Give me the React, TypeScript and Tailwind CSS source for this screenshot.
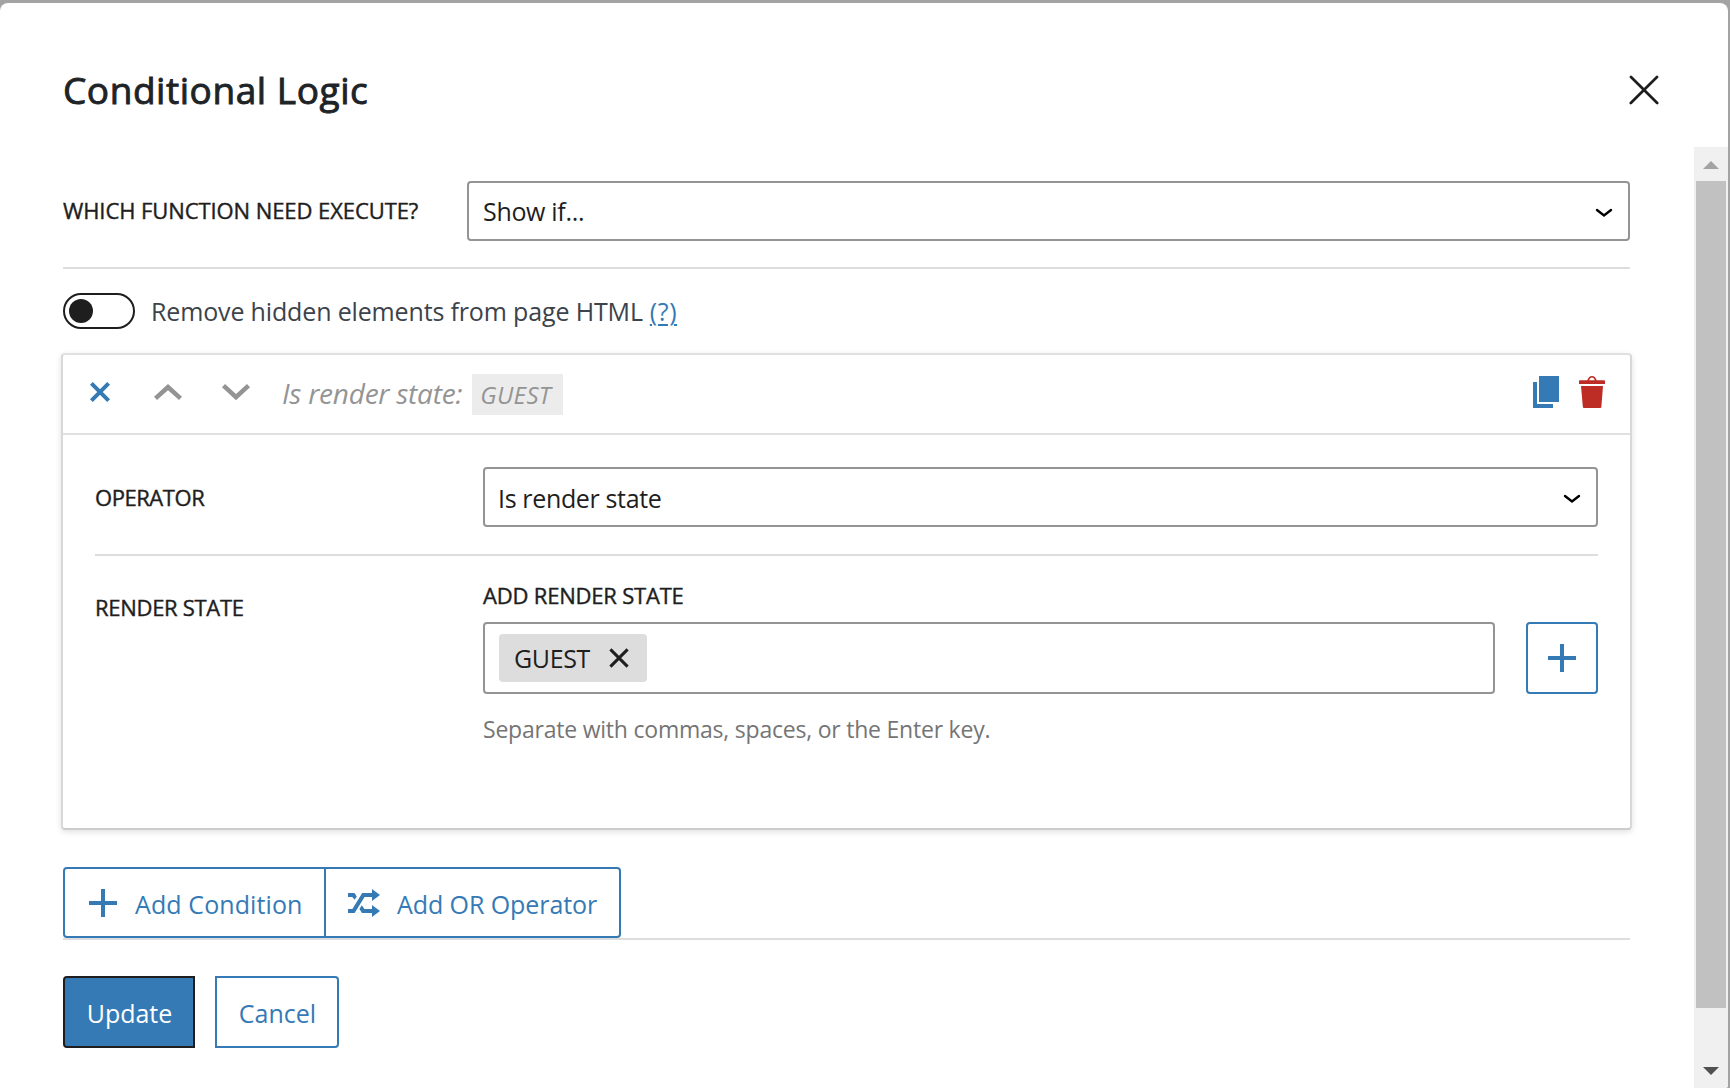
import type { ReactNode } from "react";

function CaretDown() {
  return (
    <svg className="mt-[3px]" width="18" height="10" viewBox="0 0 18 10" fill="none" stroke="#000" strokeWidth="2.4">
      <path d="M2 2l7 5.4L16 2" strokeLinecap="round" strokeLinejoin="miter" />
    </svg>
  );
}

function Plus() {
  return (
    <svg width="28" height="28" viewBox="0 0 28 28" fill="#357ab5">
      <path d="M12 0h4v12h12v4H16v12h-4V16H0v-4h12z" />
    </svg>
  );
}

function Shuffle() {
  return (
    <svg width="32" height="28" viewBox="0 0 32 28" fill="#357ab5">
      <path d="M0 4h6.5l2.3 3.6-2.2 3.2L4.2 8H0z" />
      <path d="M0 20h4.4L14.2 4H24V0l8 6-8 6V8h-7.4L6.6 24H0z" />
      <path d="M13.8 16.2l2.6 3.8H24v-4l8 6-8 6v-4H14l-2.6-4z" />
    </svg>
  );
}

function Cross({ size, stroke, color }: { size: number; stroke: number; color: string }) {
  return (
    <svg width={size} height={size} viewBox={`0 0 ${size} ${size}`} stroke={color} strokeWidth={stroke}>
      <path d={`M1.4 1.4L${size - 1.4} ${size - 1.4}M${size - 1.4} 1.4L1.4 ${size - 1.4}`} />
    </svg>
  );
}

function Select({ children }: { children: ReactNode }) {
  return (
    <div className="flex h-[60px] flex-1 items-center justify-between rounded-[4px] border-2 border-[#949494] bg-white pl-[13px] pr-[15px]">
      {children}
      <CaretDown />
    </div>
  );
}

export default function App() {
  return (
    <div className="h-[1088px] w-[1730px] overflow-hidden bg-[#a3a3a3] pt-[3px] font-['Open_Sans',sans-serif] text-[25px] leading-[30px] text-[#1e1e1e]">
      <div className="flex h-[1085px] w-[1728px] flex-col overflow-hidden rounded-t-[8px] rounded-br-[3px] bg-white">
        <header className="flex h-[144px] shrink-0 items-center justify-between pl-[63px] pr-[69px] pt-[30px]">
          <h2 className="text-[37px] leading-[40px] tracking-[0.55px] text-[#1d2327] [-webkit-text-stroke:0.9px_#1d2327]">Conditional Logic</h2>
          <svg width="30" height="30" viewBox="0 0 30 30" stroke="#1e1e1e" strokeWidth="2.7" strokeLinecap="round">
            <path d="M2 2l26.2 26M28 2L1.8 28" />
          </svg>
        </header>

        <div className="flex flex-1">
          <main className="flex-1 pl-[61px] pr-[62px] pt-[34px]">
            <div className="mx-[2px] flex h-[88px] items-start border-b-2 border-[#ddd]">
              <div className="w-[404px] text-[22px] leading-[58px] tracking-[-0.08px] [-webkit-text-stroke:0.4px_#1e1e1e]">
                WHICH FUNCTION NEED EXECUTE?
              </div>
              <Select>
                <span className="pl-px tracking-[-0.32px]">Show if...</span>
              </Select>
            </div>

            <div className="ml-[2px] mt-[24px] flex h-9 items-center">
              <div className="flex h-9 w-[72px] items-center rounded-full border-2 border-[#1e1e1e] pl-1">
                <div className="size-6 rounded-full bg-[#1e1e1e]" />
              </div>
              <div className="pl-[16px] tracking-[-0.15px] text-[#3c434a]">
                Remove hidden elements from page HTML
                <a className="ml-[7px] tracking-[0.6px] text-[#357ab5] underline decoration-2 underline-offset-[3px]">(?)</a>
              </div>
            </div>

            <section className="mt-6 h-[477px] rounded-[4px] border-2 border-b-[#ccc] border-l-[#d8d8d8] border-r-[#d8d8d8] border-t-[#e0e0e0] bg-white shadow-[0_2px_6px_rgba(0,0,0,0.12)]">
              <div className="flex h-20 items-center border-b-2 border-[#e0e0e0] pb-1 pl-[27px] pr-[25px]">
                <Cross size={20} stroke={4} color="#357ab5" />
                <svg className="ml-[44px]" width="28" height="18" viewBox="0 0 28 18" fill="#949494">
                  <path d="M14 1l14 12.8-3 3.2L14 7.2 3 17l-3-3.2z" />
                </svg>
                <svg className="ml-[40px]" width="28" height="18" viewBox="0 0 28 18" fill="#949494">
                  <path d="M14 17.2L0 4.2 3 1l11 10L25 1l3 3.2z" />
                </svg>
                <span className="ml-[32px] pt-[2px] text-[28px] italic tracking-[-0.23px] text-[#949494]">Is render state:</span>
                <span className="ml-[10px] mt-[4px] h-[41px] w-[91px] bg-[#ececec] pl-[8px] text-[24px] italic leading-[41px] tracking-[0.4px] text-[#949494]">
                  GUEST
                </span>
                <svg className="ml-auto" width="26" height="32" viewBox="0 0 26 32" fill="#357ab5">
                  <path d="M6 0h20v26H6zM0 6h4v22h16v4H0z" />
                </svg>
                <svg className="ml-5" width="26" height="32" viewBox="0 0 26 32" fill="#bd2d26">
                  <path d="M8.3 4.2C9.3 1.5 10.8 0 13 0s3.7 1.5 4.7 4.2h7.3c.6 0 1 .4 1 1V8H0V5.2c0-.6.4-1 1-1zM10.2 4.2h5.6C15.2 2.6 14.3 1.6 13 1.6s-2.2 1-2.8 2.6z" fillRule="evenodd" />
                  <path d="M2 10h22l-1.6 20.4c-.1 1-.6 1.6-1.6 1.6H5.4c-1 0-1.5-.6-1.6-1.6z" />
                </svg>
              </div>

              <div className="px-8 pt-8">
                <div className="flex h-[89px] items-start border-b-2 border-[#ddd]">
                  <div className="w-[388px] text-[22px] leading-[60px] tracking-[-0.45px] [-webkit-text-stroke:0.4px_#1e1e1e]">OPERATOR</div>
                  <Select>
                    <span className="pt-[2px] tracking-[-0.35px]">Is render state</span>
                  </Select>
                </div>

                <div className="flex pt-6">
                  <div className="w-[388px] pt-[12px] text-[22px] tracking-[-0.3px] [-webkit-text-stroke:0.4px_#1e1e1e]">RENDER STATE</div>
                  <div className="flex-1">
                    <div className="text-[22px] tracking-[-0.2px] [-webkit-text-stroke:0.4px_#1e1e1e]">ADD RENDER STATE</div>
                    <div className="mt-[12px] flex justify-between">
                      <div className="flex h-[72px] w-[1012px] items-center rounded-[4px] border-2 border-[#949494] pl-[14px]">
                        <div className="flex h-12 w-[148px] items-center justify-between rounded-[4px] bg-[#ddd] pl-[15px] pr-[18px]">
                          <span className="tracking-[-0.35px]">GUEST</span>
                          <Cross size={20} stroke={3} color="#1e1e1e" />
                        </div>
                      </div>
                      <button className="flex size-[72px] items-center justify-center rounded-[4px] border-2 border-[#357ab5]">
                        <Plus />
                      </button>
                    </div>
                    <p className="mt-[20px] text-[23px] tracking-[-0.22px] text-[#757575]">
                      Separate with commas, spaces, or the Enter key.
                    </p>
                  </div>
                </div>
              </div>
            </section>

            <div className="mx-[2px] mt-[37px] flex h-[73px] border-b-2 border-[#ddd] text-[#357ab5]">
              <button className="flex h-[71px] w-[263px] items-center rounded-l-[4px] border-2 border-[#357ab5] pl-6">
                <Plus />
                <span className="ml-[18px] pt-[3px] tracking-[0.1px]">Add Condition</span>
              </button>
              <button className="flex h-[71px] w-[295px] items-center rounded-r-[4px] border-2 border-l-0 border-[#357ab5] pl-[22px]">
                <Shuffle />
                <span className="ml-[17px] pt-[3px] tracking-[-0.08px]">Add OR Operator</span>
              </button>
            </div>

            <div className="ml-[2px] mt-9 flex gap-5">
              <button className="h-[72px] w-[132px] rounded-l-[4px] border-2 border-[#1e1e1e] bg-[#357ab5] pl-px pt-[2px] text-white">Update</button>
              <button className="h-[72px] w-[124px] rounded-r-[4px] border-2 border-[#357ab5] pl-px pt-[2px] text-[#357ab5]">Cancel</button>
            </div>
          </main>

          <aside className="flex w-[34px] flex-col items-center bg-[#f0f0f0] pr-px">
            <div className="flex h-[34px] items-center justify-center pt-[2px]">
              <svg width="16" height="8" fill="#a3a3a3">
                <path d="M8 0l8 8H0z" />
              </svg>
            </div>
            <div className="h-[827px] w-[30px] bg-[#c1c1c1]" />
            <div className="mt-auto flex h-[34px] pt-[13px]">
              <svg width="16" height="8" fill="#505050">
                <path d="M0 0h16L8 8z" />
              </svg>
            </div>
          </aside>
        </div>
      </div>
    </div>
  );
}
